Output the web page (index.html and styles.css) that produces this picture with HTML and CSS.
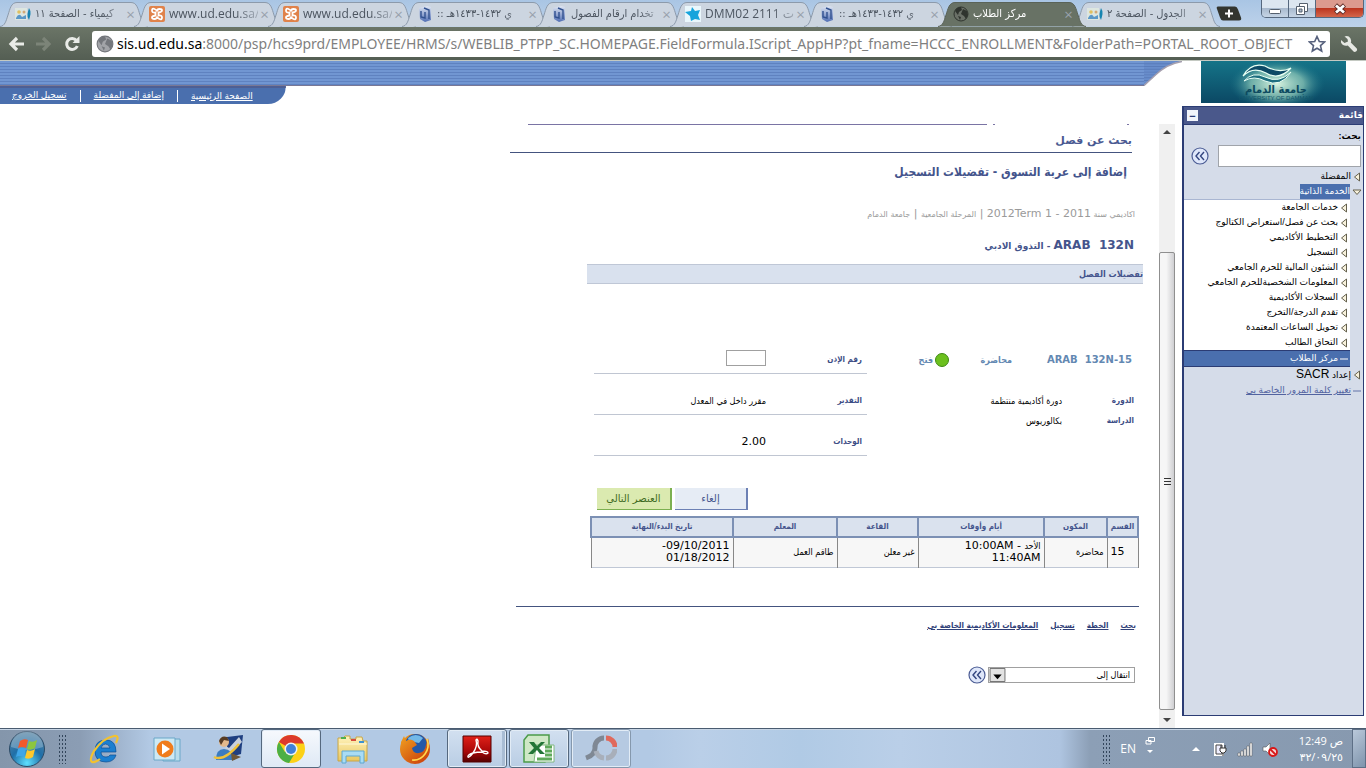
FILE: index.html
```html
<!DOCTYPE html>
<html lang="ar">
<head>
<meta charset="utf-8">
<title>مركز الطلاب</title>
<link rel="stylesheet" href="styles.css">
</head>
<body>
<svg class="defs" aria-hidden="true">
  <defs>
    <linearGradient id="g-doc" x1="0" y1="0" x2="0" y2="1"><stop offset="0" stop-color="#dfe6f3"/><stop offset="1" stop-color="#4f6db3"/></linearGradient>
    <linearGradient id="g-ff" x1="0" y1="0" x2="1" y2="1"><stop offset="0" stop-color="#f0a020"/><stop offset="1" stop-color="#c8380a"/></linearGradient>
    <radialGradient id="g-start" cx=".5" cy=".9" r=".9"><stop offset="0" stop-color="#5fe0ff"/><stop offset=".5" stop-color="#1f6fa8"/><stop offset="1" stop-color="#5b86a4"/></radialGradient>
    <linearGradient id="g-red" x1="0" y1="0" x2="0" y2="1"><stop offset="0" stop-color="#e02018"/><stop offset=".6" stop-color="#a80808"/><stop offset="1" stop-color="#500"/></linearGradient>
    <linearGradient id="g-folder" x1="0" y1="0" x2="0" y2="1"><stop offset="0" stop-color="#fff3bd"/><stop offset="1" stop-color="#e9c75f"/></linearGradient>
    <linearGradient id="g-logo" x1="0" y1="0" x2="0" y2="1"><stop offset="0" stop-color="#157488"/><stop offset="1" stop-color="#0b4864"/></linearGradient>
    <radialGradient id="g-glow"><stop offset="0" stop-color="#d8f4e0"/><stop offset=".55" stop-color="#8cc8b8" stop-opacity=".75"/><stop offset="1" stop-color="#157488" stop-opacity="0"/></radialGradient>
    <symbol id="tab-shape" viewBox="0 0 148 26" preserveAspectRatio="none"><path d="M0 25.500C5 25 6 20 8 14S11 1.500 17 1.500H131C137 1.500 138 8 140 14S143 25 148 25.500"/></symbol>
    <symbol id="i-people" viewBox="0 0 16 16"><path d="M0 2h12v12H0z" fill="#dde6e0"/><circle cx="4" cy="6" r="1.800" fill="#e0c060"/><circle cx="9" cy="6" r="1.500" fill="#d0a878"/><path d="M1 12q3-6 6-1l4-2v4H1z" fill="#5b98c8"/><path d="M14 2q2 3 1.500 6t-1.500 6q-2-3-1.500-6T14 2z" fill="#1684b0"/></symbol>
    <symbol id="i-xampp" viewBox="0 0 16 16"><rect width="16" height="16" rx="2" fill="#e0824a"/><path d="M6.500 6.500q-3.500.500-3.500-2t2.500-1.500T8 5.500q0-2.500 2.500-2.500T13 4.500t-3.500 2v3q3.500-.500 3.500 2t-2.500 1.500T8 10.500Q8 13 5.500 13T3 11.500t3.500-2z" fill="none" stroke="#fff" stroke-width="1.800"/></symbol>
    <symbol id="i-doc" viewBox="0 0 16 16"><path d="M2 2l8-2 4 1v13l-6 2-5-3z" fill="url(#g-doc)"/><path d="M4 5v6l4 1V6M7 2l5 2v9" fill="none" stroke="#31518f" stroke-width="1.400"/></symbol>
    <symbol id="i-star" viewBox="0 0 16 16"><path d="M0 0h16v16H0z" fill="#eaf7fc"/><path d="M7 1l3 4 5-1-2 5 2 5-5-1-4 2-1-5-5-4 6-1z" fill="#16a4dc"/></symbol>
    <symbol id="i-globe" viewBox="0 0 16 16"><circle cx="8" cy="8" r="7" fill="var(--sea)" stroke="var(--land)"/><path d="M2 5q2-4 6-4l1 3-3 2-1 3zM10 3l4 2 1 4-2 4-2-3-3-2zM5 10l3 1-1 3z" fill="var(--land)"/></symbol>
    <symbol id="i-go" viewBox="0 0 18 18"><circle cx="9" cy="9" r="8" fill="#dfe7fa" stroke="#4b5c94" stroke-width="1.200"/><path d="M8.500 5L5 9l3.500 4M13 5L9.500 9l3.500 4" fill="none" stroke="#33457f" stroke-width="1.400"/></symbol>
    <symbol id="i-tri" viewBox="0 0 8 10"><path d="M6.500 1L1.500 5l5 4z" fill="#f8f2dc" stroke="#65614e"/></symbol>
  </defs>
</svg>

<header class="tabstrip">
  <nav class="tabs" aria-label="Tabs">
    <div class="tab"><svg class="shape"><use href="#tab-shape"/></svg><svg class="fav"><use href="#i-people"/></svg><span class="name" dir="rtl">كيمياء - الصفحة ١١</span><button class="x" aria-label="Close">×</button></div>
    <div class="tab"><svg class="shape"><use href="#tab-shape"/></svg><svg class="fav"><use href="#i-xampp"/></svg><span class="name">www.ud.edu.sa/</span><button class="x" aria-label="Close">×</button></div>
    <div class="tab"><svg class="shape"><use href="#tab-shape"/></svg><svg class="fav"><use href="#i-xampp"/></svg><span class="name">www.ud.edu.sa/</span><button class="x" aria-label="Close">×</button></div>
    <div class="tab"><svg class="shape"><use href="#tab-shape"/></svg><svg class="fav"><use href="#i-doc"/></svg><span class="name" dir="rtl">ي ١٤٣٢-١٤٣٣هـ ::</span><button class="x" aria-label="Close">×</button></div>
    <div class="tab"><svg class="shape"><use href="#tab-shape"/></svg><svg class="fav"><use href="#i-doc"/></svg><span class="name" dir="rtl">تخدام ارقام الفصول</span><button class="x" aria-label="Close">×</button></div>
    <div class="tab"><svg class="shape"><use href="#tab-shape"/></svg><svg class="fav"><use href="#i-star"/></svg><span class="name">DMM02 2111 ات</span><button class="x" aria-label="Close">×</button></div>
    <div class="tab"><svg class="shape"><use href="#tab-shape"/></svg><svg class="fav"><use href="#i-doc"/></svg><span class="name" dir="rtl">ي ١٤٣٢-١٤٣٣هـ ::</span><button class="x" aria-label="Close">×</button></div>
    <div class="tab active"><svg class="shape"><use href="#tab-shape"/></svg><svg class="fav"><use href="#i-globe"/></svg><span class="name" dir="rtl">مركز الطلاب</span><button class="x" aria-label="Close">×</button></div>
    <div class="tab"><svg class="shape"><use href="#tab-shape"/></svg><svg class="fav"><use href="#i-people"/></svg><span class="name" dir="rtl">الجدول - الصفحة ٢</span><button class="x" aria-label="Close">×</button></div>
    <button class="newtab" aria-label="New tab"><svg viewBox="0 0 26 15"><path d="M2 .500h17q2 0 3 3l3 8q1 3-2 3H7q-2 0-3-3L1 3Q0 .500 2 .500z" fill="#33352f"/><path d="M13 3.500v8M9 7.500h8" stroke="#fff" stroke-width="2"/></svg></button>
  </nav>
  <div class="winbtns">
    <button aria-label="Minimize"><svg viewBox="0 0 14 14"><rect x="1.500" y="7.500" width="11" height="4" rx="1" fill="#fff" stroke="#55606e"/></svg></button>
    <button aria-label="Restore"><svg viewBox="0 0 14 14"><path d="M4.500 1.500h8v8h-8z" fill="#fff" stroke="#55606e"/><path d="M1.500 4.500h8v8h-8z" fill="#fff" stroke="#55606e"/><path d="M4 7h3v3H4z" fill="#aab8c8" stroke="#55606e"/></svg></button>
    <button class="close" aria-label="Close window"><svg viewBox="0 0 14 14"><path d="M2.500 3l9 8M11.500 3l-9 8" stroke="#5d2a26" stroke-width="4.500"/><path d="M3 3.500l8 7M11 3.500l-8 7" stroke="#fff" stroke-width="2.800"/></svg></button>
  </div>
</header>

<div class="toolbar">
  <button aria-label="Back"><svg viewBox="0 0 16 16"><path d="M9 2L3 8l6 6M3 8h13" fill="none" stroke="#e9ebe7" stroke-width="3.200"/></svg></button>
  <button aria-label="Forward"><svg viewBox="0 0 16 16"><path d="M7 2l6 6-6 6M13 8H0" fill="none" stroke="#7c8478" stroke-width="3.200"/></svg></button>
  <button aria-label="Reload"><svg viewBox="0 0 16 16"><path d="M12.500 4.500A5.500 5.500 0 1 0 13.300 10" fill="none" stroke="#e9ebe7" stroke-width="3"/><path d="M15.500 0v7H8.500z" fill="#e9ebe7"/></svg></button>
  <div class="omnibox">
    <svg class="globe"><use href="#i-globe"/></svg>
    <label class="host" for="url">sis.ud.edu.sa</label><input id="url" type="text" value=":8000/psp/hcs9prd/EMPLOYEE/HRMS/s/WEBLIB_PTPP_SC.HOMEPAGE.FieldFormula.IScript_AppHP?pt_fname=HCCC_ENROLLMENT&amp;FolderPath=PORTAL_ROOT_OBJECT">
    <button aria-label="Bookmark"><svg viewBox="0 0 18 18"><path d="M9 1.500l2.300 5 5.200.500-4 3.600 1.200 5.400L9 13.200 4.300 16l1.200-5.400-4-3.600 5.200-.500z" fill="#fff" stroke="#56607c" stroke-width="1.600"/></svg></button>
  </div>
  <button class="wrench" aria-label="Menu"><svg viewBox="0 0 18 18"><path d="M4.500 1.500q4-1.500 6 2 1 2 .300 4l6 6q1 1.500-.500 2.700t-2.800.300l-5.700-6Q3 11.500 1 7.500L1 5l3.500 3L8 6.500 7.500 4z" fill="#e6e8e3"/></svg></button>
</div>

<div class="page">
  <div class="left">
    <div class="band">
      <div class="stripes"></div>
      <svg class="curve" viewBox="0 0 36 27" preserveAspectRatio="none"><path d="M0 0H36Q22 3 11 15L0 27z" fill="#688dcb"/><path d="M0 3h27M0 6h21M0 9h17M0 12h14M0 15h11M0 18h8M0 21h5" stroke="#5a7cba"/><path d="M36 .500Q22 3 11 15L0 26.500" fill="none" stroke="#a59fae" stroke-width="1.500"/></svg>
    </div>
    <nav class="toplinks" dir="rtl">
      <a href="#">الصفحة الرئيسية</a><a href="#">إضافة إلى المفضلة</a><a href="#">تسجيل الخروج</a>
    </nav>
    <div class="scroller">
      <main class="content" dir="rtl">
        <div class="clipped"><i></i><i></i><b></b></div>
        <h2 class="subtab">بحث عن فصل</h2>
        <h1>إضافة إلى عربة التسوق - تفضيلات التسجيل</h1>
        <p class="term">اكاديمي سنة <bdi dir="ltr">2012Term 1 - 2011</bdi><bdi> | </bdi>المرحلة الجامعية<bdi> | </bdi>جامعة الدمام</p>
        <h3 class="course"><bdi dir="ltr">ARAB&nbsp; 132N</bdi> - التذوق الادبي</h3>
        <h4 class="bar">تفضيلات الفصل</h4>
        <div class="details">
          <section class="info">
            <div class="status"><strong class="code" dir="ltr">ARAB&nbsp; 132N-15</strong><strong class="kind">محاضرة</strong><span class="dot"></span><strong>فتح</strong></div>
            <dl>
              <dt>الدورة</dt><dd>دورة أكاديمية منتظمة</dd>
              <dt>الدراسة</dt><dd>بكالوريوس</dd>
            </dl>
          </section>
          <section class="prefs">
            <div class="row"><label for="permit">رقم الإذن</label><input id="permit" type="text"></div>
            <div class="row"><span class="lbl">التقدير</span><span>مقرر داخل في المعدل</span></div>
            <div class="row"><span class="lbl">الوحدات</span><span class="num">2.00</span></div>
          </section>
        </div>
        <div class="buttons"><button>إلغاء</button><button class="next">العنصر التالي</button></div>
        <table>
          <colgroup><col class="c1"><col class="c2"><col class="c3"><col class="c4"><col class="c5"><col class="c6"></colgroup>
          <thead><tr><th>القسم</th><th>المكون</th><th>أيام وأوقات</th><th>القاعة</th><th>المعلم</th><th>تاريخ البدء/النهاية</th></tr></thead>
          <tbody><tr><td class="sec"><bdi>15</bdi></td><td>محاضرة</td><td>الأحد<bdi> - </bdi><bdi>10:00AM</bdi><br><bdi>11:40AM</bdi></td><td>غير معلن</td><td>طاقم العمل</td><td><bdi>09/10/2011</bdi><bdi> -</bdi><br><bdi>01/18/2012</bdi></td></tr></tbody>
        </table>
        <nav class="footlinks"><a href="#">بحث</a><a href="#">الخطة</a><a href="#">تسجيل</a><a href="#">المعلومات الأكاديمية الخاصة بي</a></nav>
        <div class="goto">
          <div class="selwrap"><select aria-label="انتقال إلى"><option>انتقال إلى</option></select><svg class="arrow" viewBox="0 0 17 15"><path d="M.500.500h16v14H.500z" fill="#e3e3e3" stroke="#686868"/><path d="M4 7h9l-4.500 5z" fill="#000"/></svg></div>
          <button class="go" aria-label="Go"><svg><use href="#i-go"/></svg></button>
        </div>
      </main>
      <div class="scrollbar"><svg viewBox="0 0 16 16"><path d="M4 10h8L8 6z" fill="#444"/></svg><div class="thumb"><i></i><i></i><i></i></div><svg viewBox="0 0 16 16"><path d="M4 6h8l-4 4z" fill="#444"/></svg></div>
    </div>
  </div>

  <aside class="side" dir="rtl">
    <svg class="logo" viewBox="0 0 145 42" role="img" aria-label="جامعة الدمام" direction="ltr">
      <path d="M0 0h145v42H0z" fill="url(#g-logo)"/>
      <ellipse cx="76" cy="23" rx="48" ry="25" fill="url(#g-glow)"/>
      <path d="M42 15Q50 1 64 5q14 8 26 2-12 13-25 5-13-7-23 3z" fill="#0d4a66" stroke="#e8fff4" stroke-width="1.200"/>
      <path d="M43 20q9-10 21-4 14 7 26-5-10 16-26 9-11-6-21 0z" fill="#1d6f80" stroke="#e8fff4" stroke-width="1"/>
      <text x="75" y="32" text-anchor="middle" class="logo-ar">جامعة الدمام</text>
      <text x="75" y="39" text-anchor="middle" class="logo-en">UNIVERSITY OF DAMMAM</text>
    </svg>
    <nav class="menu">
      <h2>قائمة<button class="min" aria-label="Minimize menu">−</button></h2>
      <label for="q">بحث:</label>
      <div class="search"><input id="q" type="text"><button class="go" aria-label="Search"><svg><use href="#i-go"/></svg></button></div>
      <a class="item" href="#"><svg><use href="#i-tri"/></svg><span>المفضلة</span></a>
      <a class="item open" href="#"><svg viewBox="0 0 10 8"><path d="M1 2h8L5 6.500z" fill="#f8f2dc" stroke="#65614e"/></svg><span>الخدمة الذاتية</span></a>
      <div class="sub">
        <a class="item" href="#"><svg><use href="#i-tri"/></svg><span>خدمات الجامعة</span></a>
        <a class="item" href="#"><svg><use href="#i-tri"/></svg><span>بحث عن فصل/استعراض الكتالوج</span></a>
        <a class="item" href="#"><svg><use href="#i-tri"/></svg><span>التخطيط الأكاديمي</span></a>
        <a class="item" href="#"><svg><use href="#i-tri"/></svg><span>التسجيل</span></a>
        <a class="item" href="#"><svg><use href="#i-tri"/></svg><span>الشئون المالية للحرم الجامعي</span></a>
        <a class="item" href="#"><svg><use href="#i-tri"/></svg><span>المعلومات الشخصيةللحرم الجامعي</span></a>
        <a class="item" href="#"><svg><use href="#i-tri"/></svg><span>السجلات الأكاديمية</span></a>
        <a class="item" href="#"><svg><use href="#i-tri"/></svg><span>تقدم الدرجة/التخرج</span></a>
        <a class="item" href="#"><svg><use href="#i-tri"/></svg><span>تحويل الساعات المعتمدة</span></a>
        <a class="item" href="#"><svg><use href="#i-tri"/></svg><span>التحاق الطالب</span></a>
        <a class="item current" href="#"><svg viewBox="0 0 8 10"><path d="M0 5h8" stroke="#fff"/></svg><span>مركز الطلاب</span></a>
      </div>
      <a class="item" href="#"><svg><use href="#i-tri"/></svg><span>إعداد <bdi>SACR</bdi></span></a>
      <a class="item pw" href="#"><svg viewBox="0 0 8 10"><path d="M0 5h8" stroke="#6272a8"/></svg><span>تغيير كلمة المرور الخاصة بي</span></a>
    </nav>
  </aside>
</div>

<footer class="taskbar">
  <button class="start" aria-label="Start"><svg viewBox="0 0 38 38"><circle cx="19" cy="19" r="17.500" fill="url(#g-start)" stroke="#2c4b66"/><path d="M3 17a16 16 0 0 1 32 0q-16 6-32 0z" fill="#fff" opacity=".25"/><path d="M12 11q4-3 8-1l-2 8q-4-2-8 0z" fill="#f1582c"/><path d="M21 11q4 2 8-1l-2 8q-4 3-8 1z" fill="#8cc63e"/><path d="M10 19q4-2 8 0l-2 8q-4-2-8 0z" fill="#3fa6e8"/><path d="M19 20q4 2 8-1l-2 8q-4 3-8 1z" fill="#fdc82c"/></svg></button>
  <span class="grip"></span>
  <div class="apps">
    <button aria-label="Internet Explorer"><svg viewBox="0 0 32 32"><path d="M27 19H12q0 5 5 5 3 0 4-2h6q-2 7-10 7-11 0-11-11T17 7q10 0 10 12zm-6-4q-1-4-4.500-4T12 15z" fill="#1b7fd0" stroke="#0d4f94" stroke-width=".7"/><path d="M27 10q4-8-2-7Q14 5 5 18 0 27 3 29q3 1 8-3" fill="none" stroke="#f2c230" stroke-width="2.200"/></svg></button>
    <button aria-label="Media Player"><svg viewBox="0 0 32 32"><path d="M12 6h17v22H12z" fill="#b9ddec" stroke="#6ba7c8"/><path d="M3 5h21v22H3z" fill="#cde9f4" stroke="#6ba7c8"/><circle cx="14" cy="16" r="8.500" fill="#f07c1c"/><path d="M11 10.500v11l8-5.500z" fill="#fff"/></svg></button>
    <button aria-label="Messenger"><svg viewBox="0 0 32 32"><path d="M14 4l16-2-2 19-14 4z" fill="#1f3f80"/><path d="M26 4L16 15l-3-2-2 6 7 1L29 9z" fill="#c8d0dc"/><circle cx="11" cy="9" r="5" fill="#e3b98c"/><path d="M6 8q2-6 8-4l2 4-5-1-3 5z" fill="#573c24"/><path d="M3 27q0-11 8-11t11 11z" fill="#3b7cc0"/><path d="M1 24q10 5 25-13" fill="none" stroke="#f0c23a" stroke-width="2.500"/><path d="M18 20l10 4-9 4z" fill="#6d5738"/></svg></button>
    <button class="win on" aria-label="Chrome"><svg viewBox="0 0 32 32"><circle cx="16" cy="16" r="14" fill="#fcd116"/><path d="M16 16L3.900 9A14 14 0 0 1 29 10.500H16z" fill="#dc3a2c"/><path d="M16 16L14 30A14 14 0 0 1 3.900 9l6 10z" fill="#4caf45"/><path d="M20 20l-6 10L10 18z" fill="#4caf45"/><circle cx="16" cy="16" r="6.500" fill="#eef1f4"/><circle cx="16" cy="16" r="5" fill="#4080d8"/></svg></button>
    <button aria-label="Explorer"><svg viewBox="0 0 32 32"><path d="M1 5h5l2-2h5v3h6V4h6l1 4h4v20H1z" fill="url(#g-folder)" stroke="#c9a647"/><path d="M4 5h5" stroke="#4faf4f" stroke-width="2"/><path d="M14 7h5" stroke="#d84c3c" stroke-width="2"/><path d="M22 9h5" stroke="#3d92d0" stroke-width="2"/><path d="M2 11h28" stroke="#fff8d8"/><path d="M5 30V18h22v12h-4v-7H9v7z" fill="#a9dcf4" stroke="#5fa8d0"/></svg></button>
    <button aria-label="Firefox"><svg viewBox="0 0 32 32"><circle cx="16" cy="16" r="15" fill="url(#g-ff)"/><circle cx="17" cy="12" r="11" fill="#2358a8"/><path d="M9 5q8-6 15 0l-4 5-5-1-4 3z" fill="#72b8e8"/><path d="M2 9l3-6 2 5q4-3 8 0l3 4-5 3q1 6 7 5t7-8l2-7q4 12-4 20-8 6-16 2T2 9z" fill="url(#g-ff)"/><path d="M28 6q3 8-2 15t-13 6" fill="none" stroke="#ffd850" stroke-width="1.600"/></svg></button>
    <button class="win stack" aria-label="Adobe Reader"><svg viewBox="0 0 32 32"><path d="M2 3h28v26H2z" fill="url(#g-red)" stroke="#500"/><path d="M7 24q-1-2 5-4 5-7 3-13 1-2 2 1-1 6 4 10 6 0 6 2-2 2-6-1-5 0-9 1-4 5-5 4z" fill="none" stroke="#fff" stroke-width="1.400"/></svg></button>
    <button class="win" aria-label="Excel"><svg viewBox="0 0 32 32"><path d="M5 2h21v22l-4 5H1V7z" fill="#cfe8c6" stroke="#4b9b4a" stroke-width="1.500"/><path d="M13 12h18v17H11z" fill="#fff" stroke="#80b880"/><path d="M22 14h7M22 18h7M22 22h7M14 26h15" stroke="#5fa95a" stroke-width="2.800"/><path d="M6 9h5l3 4 4-4h4l-6 6 6 6h-5l-3-4-4 4H5l6-6z" fill="#237537"/></svg></button>
    <button class="win dim" aria-label="Recorder"><svg viewBox="0 0 32 32"><path d="M19 5a9 9 0 0 0-9 10q0 7-9 10" fill="none" stroke="#7f8894" stroke-width="5"/><path d="M21 5a9 9 0 0 1 9 9" fill="none" stroke="#e0695c" stroke-width="5"/><path d="M30 16a9 9 0 0 1-9 9M11 18a9 9 0 0 0 8 7" fill="none" stroke="#a8afba" stroke-width="5"/></svg></button>
  </div>
  <div class="tray">
    <span class="grip"></span>
    <span class="lang">EN</span>
    <svg class="langbtn" viewBox="0 0 10 22"><path d="M3.500 3.500h6v4h-6zM1 6.500h5v3.500H1z" fill="none" stroke="#fff"/><path d="M2 16h6l-3 3z" fill="#fff"/></svg>
    <svg class="up" viewBox="0 0 8 6"><path d="M0 5l4-4 4 4z" fill="#fff"/></svg>
    <svg viewBox="0 0 16 16"><path d="M3 3h8v11H3z" fill="#eef" stroke="#fff" stroke-width="2"/><path d="M4 4h6v9H4z" fill="none" stroke="#444"/><path d="M9 4v3M13 4v3M8 7h6v3l-2 2h-2l-2-2zM11 12v3" fill="#fff" stroke="#333"/></svg>
    <svg viewBox="0 0 16 16"><path d="M1 12h2v3H1zM4 10h2v5H4zM7 8h2v7H7zM10 5h2v10h-2zM13 2h2v13h-2z" fill="#fff" stroke="#555" stroke-width=".5"/></svg>
    <svg viewBox="0 0 16 16"><path d="M1 6h3l4-4v12l-4-4H1z" fill="#fff" stroke="#555" stroke-width=".6"/><circle cx="11" cy="11" r="4" fill="#f6d8d8" stroke="#d81818" stroke-width="1.800"/><path d="M8 8l6 6" stroke="#d81818" stroke-width="1.800"/></svg>
    <div class="clock"><time dir="rtl">ص <bdi>12:49</bdi></time><time>٣٢/٠٩/٢٥</time></div>
    <button class="desktop" aria-label="Show desktop"></button>
  </div>
</footer>
</body>
</html>
```
FILE: styles.css
```css
* { box-sizing: border-box; }
html, body { height: 100%; }
body { margin: 0; display: flex; flex-direction: column; overflow: hidden; background: #fff; font-family: "Liberation Sans", "DejaVu Sans", sans-serif; font-size: 10px; }
button { border: 0; padding: 0; background: none; font-family: inherit; color: inherit; }
h1, h2, h3, h4, p, dl, dd { margin: 0; }
svg { display: block; flex: none; }
.defs { position: absolute; width: 0; height: 0; }

.tabstrip { display: flex; justify-content: space-between; height: 27px; flex: none; background: linear-gradient(#a9c5e4, #bdd2ea); }
.tabs { display: flex; align-items: flex-end; font-family: "Open Sans", "DejaVu Sans", sans-serif; }
.tab { position: relative; display: flex; align-items: center; width: 148px; height: 26px; margin-right: -14px; padding: 0 12px 0 15px; gap: 4px; color: #4c5560; }
.shape { position: absolute; inset: 0; width: 100%; height: 100%; z-index: 0; fill: #ccd5e0; stroke: #8c9aab; }
.fav, .name, .x { position: relative; }
.fav { width: 16px; height: 16px; --sea: #6a7067; --land: #2f342e; }
.name { flex: 1; min-width: 0; white-space: nowrap; font-size: 12px; line-height: 20px; mask-image: linear-gradient(90deg, #000 75%, rgba(0, 0, 0, .3)); }
.tab [dir="rtl"] { text-align: left; font-family: "DejaVu Sans Condensed", "DejaVu Sans", sans-serif; font-size: 11px; }
.x { width: 11px; margin-left: -3px; font-size: 15px; line-height: 20px; color: #98a1ac; }
.tab.active { color: #fff; z-index: 1; }
.tab.active .shape { fill: #687265; stroke: #5a6358; }
.newtab { align-self: center; margin-left: 10px; }
.newtab svg { width: 26px; height: 15px; }
.winbtns { display: flex; height: 18px; margin-right: 2px; border: 1px solid #56687e; border-top: 0; border-radius: 0 0 5px 5px; overflow: hidden; }
.winbtns button { display: grid; place-items: center; width: 27px; background: linear-gradient(#dce6f0 45%, #a9bace 50%, #c6d5e5); border-right: 1px solid #56687e; }
.winbtns svg { width: 14px; height: 14px; }
.winbtns .close { width: 47px; border: 0; background: linear-gradient(#dc9a8e 45%, #bc3620 50%, #d4664a); }

.toolbar { display: flex; align-items: center; flex: none; height: 34px; padding: 0 8px; gap: 12px; background: linear-gradient(#6b7567, #545e53); border-bottom: 1px solid #c4c9c2; }
.toolbar svg { width: 16px; height: 16px; }
.omnibox { display: flex; align-items: center; flex: 1; height: 26px; margin-right: -2px; padding: 0 4px; background: #fff; border-radius: 3px; font: 14px/24px "Noto Sans", "Open Sans", sans-serif; }
.omnibox .globe { --sea: #a2a4a8; --land: #74777c; margin-right: 3px; }
.omnibox svg { width: 18px; height: 18px; }
.omnibox input { flex: 1; min-width: 0; border: 0; padding: 0; outline: 0; background: none; font: inherit; color: #7f7f7f; }
.host { color: #000; }
.wrench svg { width: 18px; height: 18px; }

.page { display: flex; flex: 1; min-height: 0; }
.left { display: flex; flex-direction: column; flex: 1; min-width: 0; }
.band { display: flex; height: 25px; }
.stripes { flex: 1; background: repeating-linear-gradient(#7196d2 0 2px, #5f82c0 2px 3px); border-bottom: 1px solid #7a7894; }
.curve { width: 38px; height: 25px; }
.toplinks { display: flex; align-self: flex-start; align-items: center; height: 18px; padding: 0 33px 0 12px; background: #4a6fae; border-top: 2px solid #4e5f94; border-radius: 0 0 20px 0; }
.toplinks a { color: #fff; font-size: 9px; line-height: 11px; }
.toplinks a + a { margin-right: 13px; }
.toplinks a + a::before { content: ""; display: inline-block; height: 12px; margin-left: 13px; border-right: 1px solid #fff; vertical-align: middle; }
.scroller { display: flex; flex: 1; min-height: 0; margin-right: 7px; padding-top: 20px; }
.content { flex: 1; min-width: 0; overflow: hidden; font-family: "DejaVu Sans", sans-serif; }
.scrollbar { display: flex; flex-direction: column; width: 16px; background: #f0f0f0; }
.scrollbar svg { width: 16px; height: 16px; }
.thumb { display: flex; flex-direction: column; align-items: center; justify-content: center; gap: 2px; flex: 1; margin: 112px 0 2px; border: 1px solid #8f8f8f; border-radius: 2px; background: linear-gradient(90deg, #f6f6f6 45%, #cfcfd2); }
.thumb i { width: 7px; height: 1px; background: #333; }

.clipped { display: flex; height: 1px; padding-right: 30px; margin-bottom: 7px; }
.clipped i { width: 2px; background: #7a74a4; }
.clipped i + i { margin-right: 132px; }
.clipped b { width: 459px; margin-right: 6px; background: #7a74a4; }
.subtab { width: 622px; margin-right: 27px; padding-bottom: 3px; border-bottom: 1px solid #44547f; font-size: 11px; line-height: 17px; color: #4a5a92; }
h1 { margin: 9px 32px 0 0; font-family: "DejaVu Sans Condensed", "DejaVu Sans", sans-serif; font-size: 12px; line-height: 20px; color: #44548c; }
.term { margin: 22px 24px 0 0; font-size: 8px; line-height: 20px; color: #9a9a9a; }
.term bdi { font-size: 11px; }
.course { margin: 10px 25px 0 0; font-size: 9px; line-height: 20px; color: #44548c; }
.course bdi { font-size: 12px; }
.bar { width: 556px; margin: 8px 16px 0 0; font-family: "DejaVu Sans Condensed", "DejaVu Sans", sans-serif; font-size: 9px; line-height: 18px; color: #44548c; background: #d9e1ee; border: solid #bfc7d6; border-width: 1px 0; }
.details { display: flex; justify-content: space-between; width: 540px; margin: 63px 25px 0 0; color: #000; font-family: "DejaVu Sans Condensed", "DejaVu Sans", sans-serif; font-size: 9px; line-height: 20px; }
.status { display: flex; align-items: center; height: 26px; color: #6388b2; }
.status .code { margin-right: 2px; width: 120px; font-family: "DejaVu Sans", sans-serif; font-size: 10px; text-align: right; }
.status .kind { width: 63px; }
.dot { width: 14px; height: 14px; margin-left: 2px; border: 1px solid #3f8a14; border-radius: 50%; background: #6cc01e; }
dl { display: grid; grid-template-columns: 72px 1fr; margin-top: 18px; }
dt, .lbl, .prefs label { font-weight: bold; color: #3b4c84; font-size: 8px; }
.prefs { width: 273px; }
.row { display: grid; grid-template-columns: 96px 1fr; align-items: center; height: 41px; padding: 14px 5px 0 0; border-bottom: 1px solid #c0c6d2; }
.row:first-child { height: 27px; padding-top: 0; }
.row input { width: 40px; height: 16px; margin-bottom: 5px; padding: 0; border: 1px solid #a0a0a0; }
.num { font-family: "DejaVu Sans", sans-serif; font-size: 11px; }
.buttons { display: flex; gap: 3px; margin: 32px 411px 0 0; }
.buttons button { width: 73px; height: 22px; font-size: 10px; color: #44548c; background: #e6ecf5; border: solid #6c80b4; border-width: 0 2px 1px 0; }
.buttons .next { width: 75px; color: #3f6a22; background: #dbeab0; border-color: #7cb050; }
table { width: 547px; margin: 6px 20px 0 0; table-layout: fixed; border-collapse: collapse; border: 1px solid #c0c8d6; font-family: "DejaVu Sans Condensed", "DejaVu Sans", sans-serif; line-height: 12px; }
th { height: 20px; padding: 0; font-size: 8px; color: #44548c; background: #dae2ee; border: 2px solid #7c90b4; }
td { height: 30px; padding: 0 3px; font-size: 9px; background: #f7f7f7; border-right: 1px solid #888; border-left: 1px solid #888; }
td bdi { font-family: "DejaVu Sans", sans-serif; font-size: 11px; }
.sec { text-align: left; }
.c1 { width: 31px; } .c2 { width: 63px; } .c3 { width: 126px; } .c4 { width: 81px; } .c5 { width: 104px; } .c6 { width: 142px; }
.footlinks { display: flex; gap: 12px; width: 623px; margin: 38px 20px 0 0; padding: 11px 3px 0 0; border-top: 1px solid #44547f; font-family: "DejaVu Sans Condensed", "DejaVu Sans", sans-serif; font-weight: bold; font-size: 8px; line-height: 16px; }
.footlinks a { color: #2f4078; }
.goto { display: flex; align-items: center; gap: 2px; margin: 32px 24px 0 0; }
.selwrap { position: relative; }
select { width: 147px; height: 16px; appearance: none; border: 1px solid #a0a0a0; border-radius: 0; background: #fff; padding: 0 4px; font: 9px/12px "DejaVu Sans Condensed", "DejaVu Sans", sans-serif; color: #000; }
.arrow { position: absolute; left: 1px; top: 1px; width: 17px; height: 14px; pointer-events: none; }
.go svg { width: 18px; height: 18px; }

.side { display: flex; flex-direction: column; width: 184px; padding: 0 2px 12px 0; }
.logo { width: 145px; height: 42px; margin: 0 18px 3px 0; }
.logo-ar { font: bold 11px "DejaVu Sans Condensed", "DejaVu Sans", sans-serif; fill: #0c4a60; }
.logo-en { font: 6px "Liberation Sans", sans-serif; fill: #14566a; }
.menu { display: flex; flex-direction: column; flex: 1; background: #d5dce9; border: solid #2b3c74; border-width: 1px 1px 1px 2px; font-size: 10px; line-height: 15px; }
.menu h2 { display: flex; justify-content: space-between; align-items: center; height: 18px; padding: 0 0 0 3px; background: #4a588b; border-bottom: 1px solid #2b3c74; color: #fff; font-size: 9px; }
.min { width: 11px; height: 11px; background: #f0f4fb; color: #2b3c74; font: bold 11px/10px "Liberation Sans", sans-serif; }
.menu label { padding: 3px 2px 0; font-weight: bold; font-size: 9px; line-height: 16px; }
.search { display: flex; align-items: center; justify-content: space-between; padding: 1px 2px 2px 7px; }
.search input { width: 143px; height: 22px; border: 1px solid #a0a4aa; background: #fff; }
.item { display: flex; align-items: center; gap: 2px; padding-right: 2px; color: #000; text-decoration: none; font-size: 9px; line-height: 15px; white-space: nowrap; }
.item svg { width: 8px; height: 10px; }
.item.open svg { width: 10px; margin-right: -1px; }
.open span { background: #4a6fae; color: #fff; }
.item bdi { font-size: 12px; }
.sub { margin-right: 13px; padding: 0; background: #fff; border-top: 1px solid #a9b6d2; }
.item.current { height: 17px; background: #4a6fae; color: #fff; border: solid #2b3c74; border-width: 1px 0; }
.pw { color: #5263a0; text-decoration: underline; }

.taskbar { display: flex; align-items: center; flex: none; height: 40px; padding-left: 8px; border-top: 1px solid #4a5b70; background: linear-gradient(90deg, #8496ab 0, #8b9db4 80px, #b2c9e4 150px, #b2c9e4 650px, #bacfe8 700px, #b0cae5 800px, #bacfe8 900px, #aec4e0 calc(100% - 306px), #8c9fb6 calc(100% - 276px), #8799af); box-shadow: inset 0 1px #c8d6e6; }
.start svg { width: 38px; height: 38px; }
.grip { width: 9px; height: 30px; margin-left: 12px; background: radial-gradient(circle, #33465c 1px, transparent 1px) 0 0 / 3px 4px; }
.apps { display: flex; height: 39px; margin-left: 8px; gap: 2px; }
.apps button { display: grid; place-items: center; width: 60px; border-radius: 3px; }
.apps svg { width: 32px; height: 32px; }
.win { border: 1px solid #55687e; background: linear-gradient(#d2e0f0, #b9cde4); box-shadow: inset 0 0 0 1px #e2ecf6; }
.win.on { background: linear-gradient(#f6f9fd, #dfe9f5); }
.win.stack { box-shadow: inset 0 0 0 1px #e2ecf6, inset -4px 0 #a9bdd4; }
.win.dim { border-color: #8598ad; background: #b6cae2; }
.tray { display: flex; align-items: center; height: 100%; margin-left: auto; gap: 9px; color: #fff; font: 12px/16px "Open Sans", "DejaVu Sans", sans-serif; }
.tray svg { width: 16px; height: 16px; }
.tray .langbtn { width: 10px; height: 22px; margin: 0 28px 8px 0; }
.tray .up { width: 8px; height: 6px; margin-right: 3px; }
.clock { display: flex; flex-direction: column; align-items: flex-end; width: 56px; font-size: 11px; }
.desktop { width: 14px; height: 100%; border: 1px solid #5d6f86; background: linear-gradient(135deg, #b9c8da, #7f94ac); }
```
